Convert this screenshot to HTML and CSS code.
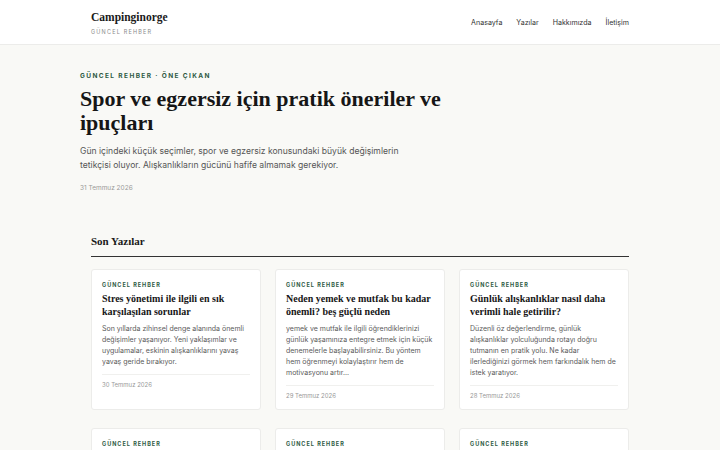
FILE: index.html
```html
<!DOCTYPE html>
<html lang="tr">
<head>
<meta charset="utf-8">
<title>Campinginorge</title>
<link rel="stylesheet" href="styles.css">
</head>
<body>
<header class="site-header">
  <div class="header-inner">
    <div class="brand">
      <div class="brand-name">Campinginorge</div>
      <div class="brand-tag">GÜNCEL REHBER</div>
    </div>
    <nav class="nav">
      <a href="#">Anasayfa</a>
      <a href="#">Yazılar</a>
      <a href="#">Hakkımızda</a>
      <a href="#">İletişim</a>
    </nav>
  </div>
</header>
<main>
  <section class="hero">
    <div class="hero-label">GÜNCEL REHBER · ÖNE ÇIKAN</div>
    <h1 class="hero-title">Spor ve egzersiz için pratik öneriler ve ipuçları</h1>
    <p class="hero-text">Gün içindeki küçük seçimler, spor ve egzersiz konusundaki büyük değişimlerin tetikçisi oluyor. Alışkanlıkların gücünü hafife almamak gerekiyor.</p>
    <div class="hero-date">31 Temmuz 2026</div>
  </section>
  <section class="posts">
    <h2 class="posts-title">Son Yazılar</h2>
    <div class="grid">
      <article class="card">
        <div class="card-label">GÜNCEL REHBER</div>
        <h3 class="card-title">Stres yönetimi ile ilgili en sık karşılaşılan sorunlar</h3>
        <p class="card-text">Son yıllarda zihinsel denge alanında önemli değişimler yaşanıyor. Yeni yaklaşımlar ve uygulamalar, eskinin alışkanlıklarını yavaş yavaş geride bırakıyor.</p>
        <div class="card-date">30 Temmuz 2026</div>
      </article>
      <article class="card">
        <div class="card-label">GÜNCEL REHBER</div>
        <h3 class="card-title">Neden yemek ve mutfak bu kadar önemli? beş güçlü neden</h3>
        <p class="card-text">yemek ve mutfak ile ilgili öğrendiklerinizi günlük yaşamınıza entegre etmek için küçük denemelerle başlayabilirsiniz. Bu yöntem hem öğrenmeyi kolaylaştırır hem de motivasyonu artır...</p>
        <div class="card-date">29 Temmuz 2026</div>
      </article>
      <article class="card">
        <div class="card-label">GÜNCEL REHBER</div>
        <h3 class="card-title">Günlük alışkanlıklar nasıl daha verimli hale getirilir?</h3>
        <p class="card-text">Düzenli öz değerlendirme, günlük alışkanlıklar yolculuğunda rotayı doğru tutmanın en pratik yolu. Ne kadar ilerlediğinizi görmek hem farkındalık hem de istek yaratıyor.</p>
        <div class="card-date">28 Temmuz 2026</div>
      </article>
      <article class="card">
        <div class="card-label">GÜNCEL REHBER</div>
        <h3 class="card-title">Uyku düzeni hakkında bilmeniz gereken her şey</h3>
        <p class="card-text">Uzmanlar, uyku düzeni konusunda küçük ama kararlı adımların büyük farklar yarattığını vurguluyor.</p>
        <div class="card-date">27 Temmuz 2026</div>
      </article>
      <article class="card">
        <div class="card-label">GÜNCEL REHBER</div>
        <h3 class="card-title">Kişisel gelişim için pratik öneriler ve ipuçları</h3>
        <p class="card-text">Gün içindeki küçük seçimler, kişisel gelişim konusundaki büyük değişimlerin tetikçisi oluyor.</p>
        <div class="card-date">26 Temmuz 2026</div>
      </article>
      <article class="card">
        <div class="card-label">GÜNCEL REHBER</div>
        <h3 class="card-title">Sağlıklı beslenme üzerine yeni yaklaşımlar</h3>
        <p class="card-text">Sağlıklı beslenme ile ilgili öğrendiklerinizi günlük yaşamınıza entegre etmek için küçük denemelerle başlayın.</p>
        <div class="card-date">25 Temmuz 2026</div>
      </article>
    </div>
  </section>
</main>
</body>
</html>
```

FILE: styles.css
```css
* { box-sizing: border-box; }
html, body { margin: 0; padding: 0; }
body {
  background: #f9f9f6;
  font-family: Inter, "Liberation Sans", sans-serif;
  color: #1a1a1a;
}
.site-header {
  background: #ffffff;
  border-bottom: 1px solid #ececea;
}
.header-inner {
  width: 538px;
  margin: 0 auto;
  height: 44px;
  display: flex;
  align-items: center;
  justify-content: space-between;
}
.brand-name {
  font-family: "Liberation Serif", serif;
  font-weight: 700;
  font-size: 11.5px;
  line-height: 13px;
  color: #1a1a1a;
  margin-top: 1px;
}
.brand-tag {
  font-size: 5.5px;
  letter-spacing: 1.2px;
  color: #8a8a8a;
  margin-top: 5px;
}
.nav {
  display: flex;
  gap: 14px;
}
.nav a {
  font-size: 7.1px;
  color: #333;
  text-decoration: none;
}
.hero {
  width: 560px;
  margin: 0 auto;
  padding: 27px 0 0;
}
.hero-label {
  font-size: 6.5px;
  font-weight: 700;
  letter-spacing: 1.4px;
  color: #2e5a44;
}
.hero-title {
  font-family: "Liberation Serif", serif;
  font-weight: 700;
  font-size: 22px;
  line-height: 24px;
  margin: 7px 0 0;
  max-width: 380px;
  color: #161616;
}
.hero-text {
  font-size: 8.6px;
  line-height: 14px;
  color: #555;
  margin: 9px 0 0;
  max-width: 340px;
}
.hero-date {
  font-size: 6.5px;
  color: #999;
  margin-top: 12px;
}
.posts {
  width: 538px;
  margin: 42px auto 0;
}
.posts-title {
  font-family: "Liberation Serif", serif;
  font-weight: 700;
  font-size: 11px;
  line-height: 14px;
  margin: 0;
  padding-bottom: 8px;
  border-bottom: 1.5px solid #333;
}
.grid {
  margin-top: 12px;
  display: grid;
  grid-template-columns: repeat(3, 1fr);
  gap: 18px 14px;
}
.card {
  background: #fff;
  border: 1px solid #ececea;
  border-radius: 3px;
  padding: 12px 10px 10px;
  display: flex;
  flex-direction: column;
}
.card-label {
  font-size: 5.5px;
  font-weight: 700;
  letter-spacing: 1px;
  color: #2e5a44;
}
.card-title {
  font-family: "Liberation Serif", serif;
  font-weight: 700;
  font-size: 10px;
  line-height: 12.5px;
  margin: 5px 0 0;
  color: #161616;
}
.card-text {
  font-size: 7px;
  line-height: 11px;
  color: #5a5a5a;
  margin: 5px 0 0;
}
.card-date {
  font-size: 6px;
  color: #999;
  margin-top: 7px;
  padding-top: 6px;
  border-top: 1px solid #f0f0ee;
}
```
